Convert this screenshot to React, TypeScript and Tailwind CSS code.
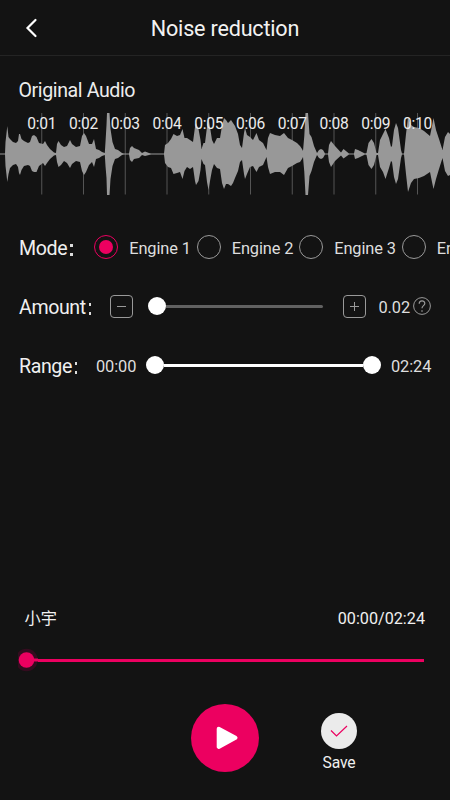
import React from "react";

// [x, height above the axis, height below the axis]
const wave: number[][] = [
  [0, 0.6, 0.6], [5, 0.6, 0.6], [5.5, 12, 12], [7.3, 28, 28], [8.5, 17, 20], [10, 15, 14], [13, 12, 11],
  [16, 11, 10], [18, 13, 13], [19, 20, 19], [20, 20, 21], [21.5, 15, 16], [24, 13, 12], [28, 11, 11],
  [30, 12, 12], [32, 18, 17], [34, 19, 18], [36.5, 17, 18], [39, 11, 12], [43, 10, 9], [45, 13, 12],
  [47, 9, 9], [50, 5, 5], [54, 1.5, 1.5], [56, 1, 1], [57, 10, 8], [58.5, 13, 13], [61, 9, 11], [64, 7, 7],
  [67, 8, 9], [70, 14, 14], [72, 10, 10], [76, 7, 7], [80, 8, 8], [82, 18, 17], [84, 21, 21], [86, 18, 18],
  [89, 10, 11], [92, 10, 8], [94, 15, 13], [96, 5, 5], [99, 4, 4], [102, 2, 2], [104.8, 1, 1],
  [105.5, 12, 12], [106.5, 29, 24], [107, 41, 41], [109.5, 41, 41], [110.5, 25, 25], [112.5, 12, 12],
  [115, 5, 5], [118, 4, 4], [122, 1, 1], [124, 0.6, 0.6], [129, 0.6, 0.6], [130, 6, 6], [132, 8, 8],
  [134, 6, 5], [139, 4, 4], [142, 1, 1], [145, 2.5, 2], [149, 1, 1], [151, 0.6, 0.6], [164, 0.6, 0.6],
  [165, 9, 9], [168, 11, 13], [171, 15, 14], [173.5, 20, 20], [177, 18, 19], [180, 19, 18], [182.5, 25, 25],
  [184.5, 16, 17], [187, 16, 13], [190, 14, 15], [193, 12, 13], [195, 27, 27], [196, 31, 31], [198.5, 25, 27],
  [200.5, 14, 16], [201.5, 5, 5], [203.5, 11, 10], [205, 11, 11], [207, 27, 28], [208.5, 35, 36],
  [210, 27, 27], [212, 14, 16], [214, 10, 10], [217, 16, 14], [220, 16, 15], [222, 28, 29], [224, 36, 35],
  [226, 34, 30], [228, 31, 30], [231, 34, 32], [233, 31, 29], [235, 28, 24], [238, 20, 17], [240, 9, 8],
  [242, 6, 6], [244, 21, 20], [245, 26, 25], [247, 19, 20], [250, 17, 13], [253, 14, 12], [256.5, 21, 18],
  [259, 14, 13], [263, 11, 11], [266.5, 4, 3], [268, 16, 13], [270, 21, 20], [275, 19, 18], [280, 18, 18],
  [284, 21, 21], [288, 16, 14], [292, 14, 12], [297, 11, 9], [300, 8, 8], [302, 5, 5], [303, 3, 3],
  [304.3, 18, 18], [305.5, 41, 41], [308, 41, 41], [309.5, 20, 22], [311.5, 17, 17], [314, 8, 8],
  [317, 1, 1], [319, 4, 4], [321, 5, 5], [323, 4, 4], [325, 0.6, 0.6], [328, 0.6, 0.6], [329, 9, 8],
  [331, 13, 13], [335, 8, 7], [341, 1.5, 1.5], [343.5, 5, 4.5], [349, 0.6, 0.6], [354, 0.6, 0.6],
  [355, 5, 5], [358, 4, 4], [365, 0.6, 0.6], [366.5, 1, 1], [368.5, 11, 11], [371.5, 15, 15], [374, 11, 11],
  [376.5, 1, 1], [378, 1, 1], [380, 14, 13], [383, 20, 18], [385.5, 25, 25], [389, 16, 14], [391, 7, 7],
  [392, 8, 8], [394, 24, 23], [396, 31, 30], [398, 26, 25], [401, 4, 4], [402, 0.6, 0.6], [404, 0.6, 0.6],
  [406, 20, 20], [408, 37, 38], [411, 29, 29], [414, 27, 25], [419, 26, 24], [424, 23, 22], [430, 18, 18],
  [432, 28, 28], [433.5, 36, 35], [436, 24, 25], [439, 15, 15], [442.5, 4, 4], [445, 17, 17], [448, 22, 22],
  [450, 20, 21],
];

const AXIS = 41;

const wavePath =
  "M" +
  wave.map(([x, up]) => `${x} ${AXIS - up}`).join("L") +
  "L" +
  [...wave].reverse().map(([x, , down]) => `${x} ${AXIS + down}`).join("L") +
  "Z";

const seconds = [1, 2, 3, 4, 5, 6, 7, 8, 9, 10];

function Waveform() {
  return (
    <svg className="block h-[82px] w-full" viewBox="0 0 450 82">
      {seconds.map((s) => (
        <rect key={s} x={s * 41.75 - 0.5} y="0" width="1" height="81.5" fill="#555" />
      ))}
      <path d={wavePath} fill="#989898" />
      {seconds.map((s) => (
        <text
          key={s}
          x={s * 41.75}
          y="16"
          textAnchor="middle"
          fontSize="15.6"
          letterSpacing="-0.3"
          fill="#ececec"
        >
          0:{String(s).padStart(2, "0")}
        </text>
      ))}
    </svg>
  );
}

function Label({ children }: { children: string }) {
  return (
    <span className="flex shrink-0 items-center pt-[3px] text-[19.6px] tracking-[-0.4px] text-[#f0f0f0]">
      {children}
      <span className="ml-[3px] flex flex-col gap-[6px] pt-[2px]">
        <span className="h-[3px] w-[2.5px] bg-[#dcdcdc]" />
        <span className="h-[3px] w-[2.5px] bg-[#dcdcdc]" />
      </span>
    </span>
  );
}

function Engine({ name, checked }: { name: string; checked?: boolean }) {
  return (
    <div className="flex w-[102.5px] shrink-0 items-center">
      <span
        className={`flex size-6 shrink-0 items-center justify-center rounded-full border ${
          checked ? "border-[#ec0060]" : "border-[#999]"
        }`}
      >
        {checked && <span className="size-[14px] rounded-full bg-[#ec0060]" />}
      </span>
      <span className="ml-[11px] whitespace-nowrap pt-[4px] text-[16.4px] tracking-[-0.1px] text-[#dedede]">
        {name}
      </span>
    </div>
  );
}

function StepButton({ plus }: { plus?: boolean }) {
  return (
    <button className="flex size-[23px] shrink-0 items-center justify-center rounded-[4px] border border-[#999]">
      <svg width="9" height="9" viewBox="0 0 9 9" stroke="#999" strokeWidth="1">
        <path d="M0 4.5H9" />
        {plus && <path d="M4.5 0V9" />}
      </svg>
    </button>
  );
}

export default function App() {
  return (
    <div className="flex h-[800px] w-[450px] flex-col overflow-hidden bg-[#131313] font-[Roboto,'Noto_Sans_CJK_SC',sans-serif] leading-none text-white">
      {/* Header */}
      <header className="grid h-14 shrink-0 grid-cols-[64px_1fr_64px] items-center border-b border-[#242424]">
        <button className="pl-[25px]">
          <svg width="13" height="20" viewBox="0 0 13 20" fill="none" stroke="#fff" strokeWidth="2.2" strokeLinecap="round">
            <path d="M10.5 2L2.5 10L10.5 18" />
          </svg>
        </button>
        <h1 className="pt-[2px] text-center text-[21.6px] tracking-[-0.2px] text-[#f2f2f2]">
          Noise reduction
        </h1>
      </header>

      <h2 className="mt-[25px] h-8 pl-[18.5px] text-[19.6px] tracking-[-0.4px] text-[#ededed]">
        Original Audio
      </h2>
      <Waveform />

      {/* Settings */}
      <section className="mt-[37px] flex h-[30px] shrink-0 items-center pl-[19px]">
        <div className="w-[75.2px] shrink-0">
          <Label>Mode</Label>
        </div>
        <div className="flex">
          <Engine name="Engine 1" checked />
          <Engine name="Engine 2" />
          <Engine name="Engine 3" />
          <Engine name="Engine 4" />
        </div>
      </section>

      <section className="mt-[29px] flex h-[30px] shrink-0 items-center pl-[19px]">
        <div className="w-[91px] shrink-0">
          <Label>Amount</Label>
        </div>
        <StepButton />
        <div className="ml-[15px] flex w-[175px] items-center">
          <span className="size-[18px] shrink-0 rounded-full bg-white" />
          <span className="h-[3px] flex-1 rounded-r-full bg-[#616161]" />
        </div>
        <div className="ml-5">
          <StepButton plus />
        </div>
        <span className="ml-[12.5px] w-[34.3px] pt-[4px] text-[16.4px] tracking-[-0.1px] text-[#dedede]">
          0.02
        </span>
        <svg width="18" height="18" viewBox="0 0 18 18" fill="none" stroke="#999" strokeWidth="1">
          <circle cx="9" cy="9" r="8.4" />
          <path d="M6.2 6.8C6.2 3 11.8 3 11.8 6.5C11.8 8.7 9 8.6 9 11.3" strokeWidth="1.2" />
          <path d="M9 13.2V14.7" strokeWidth="1.3" />
        </svg>
      </section>

      <section className="mt-[29px] flex h-[30px] shrink-0 items-center pl-[19px]">
        <div className="w-[77px] shrink-0">
          <Label>Range</Label>
        </div>
        <span className="w-[50px] pt-[4px] text-[16.4px] tracking-[-0.1px] text-[#dedede]">00:00</span>
        <div className="flex w-[235px] items-center">
          <span className="size-[18px] shrink-0 rounded-full bg-white" />
          <span className="h-[3px] flex-1 bg-white" />
          <span className="size-[18px] shrink-0 rounded-full bg-white" />
        </div>
        <span className="ml-[10px] pt-[4px] text-[16.4px] tracking-[-0.1px] text-[#dedede]">02:24</span>
      </section>

      {/* Player */}
      <div className="mt-auto flex h-5 shrink-0 items-center justify-between pl-[24.5px] pr-[25px] text-[16.2px] text-[#f0f0f0]">
        <span className="pt-[2px]">小宇</span>
        <span className="pt-[2px]">00:00/02:24</span>
      </div>
      <div className="mt-5 flex h-6 shrink-0 items-center pl-[18px] pr-[26px]">
        <svg width="20" height="24" viewBox="0 0 20 24" className="shrink-0">
          <circle cx="8.5" cy="12" r="11.2" fill="#340c1f" />
          <circle cx="8.5" cy="12" r="7.8" fill="#ec0060" />
          <path d="M14 12H20" stroke="#ec0060" strokeWidth="3" />
        </svg>
        <span className="h-[3px] flex-1 bg-[#ec0060]" />
      </div>
      <div className="mt-8 flex h-24 shrink-0 items-start pl-[191px]">
        <button className="flex size-[68px] items-center justify-center rounded-full bg-[#ec0060]">
          <svg width="24" height="24" viewBox="0 0 24 24" className="ml-[4px]" fill="#fff" stroke="#fff" strokeWidth="4" strokeLinejoin="round">
            <path d="M3.7 2.7L20.5 11.8L3.7 20.9Z" />
          </svg>
        </button>
        <button className="ml-[56px] mt-[9px] flex w-[48px] flex-col items-center">
          <span className="flex size-9 items-center justify-center rounded-full bg-[#ebebeb]">
            <svg width="18" height="12" viewBox="0 0 18 12" fill="none" stroke="#ec0060" strokeWidth="1.2">
              <path d="M1 5.5L6.5 11L17 1" />
            </svg>
          </span>
          <span className="mt-[6px] text-[15.7px] tracking-[-0.1px] text-[#f0f0f0]">Save</span>
        </button>
      </div>
    </div>
  );
}
